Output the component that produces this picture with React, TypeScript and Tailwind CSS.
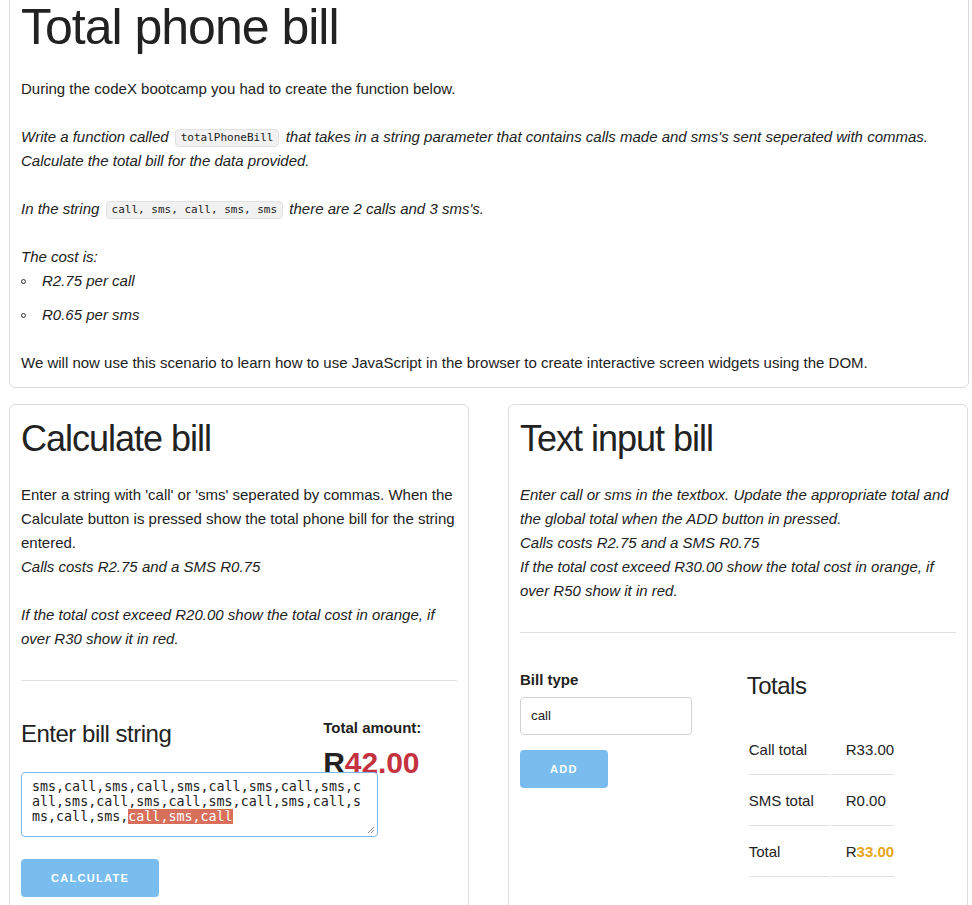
import React from 'react';

const Code: React.FC<{ children: React.ReactNode }> = ({ children }) => (
  <code className="not-italic inline-block align-[1px] mx-[2px] px-[5px] h-[18px] leading-[16px] text-[11px] bg-[#f1f1f1] border border-[#e1e1e1] rounded-[4px] font-['DejaVu_Sans_Mono',monospace]">
    {children}
  </code>
);

const Button: React.FC<{ label: string }> = ({ label }) => (
  <button className="h-[38px] px-[30px] bg-[#79bdef] text-white text-[11px] font-bold tracking-[1.3px] uppercase rounded-[4px]">
    {label}
  </button>
);

const Bullet: React.FC<{ children: React.ReactNode }> = ({ children }) => (
  <li className="flex items-center mb-[10px]">
    <span className="w-[5px] h-[5px] rounded-full border border-[#333] mr-[16px] mt-[1px]" />
    <span>{children}</span>
  </li>
);

const Card: React.FC<{ className?: string; children: React.ReactNode }> = ({ className = '', children }) => (
  <div className={`border border-[#dcdcdc] rounded-[6px] px-[11px] pt-[11px] ${className}`}>{children}</div>
);

const App: React.FC = () => {
  const totals = [
    { label: 'Call total', value: <>R33.00</> },
    { label: 'SMS total', value: <>R0.00</> },
    { label: 'Total', value: <>R<span className="font-bold text-[#e8a520]">33.00</span></> },
  ];

  return (
    <div className="min-h-[905px] bg-white text-[#222] text-[15px] leading-[24px] font-['Liberation_Sans',Arial,sans-serif] overflow-hidden">
      <div className="ml-[9px] w-[960px]">
        {/* Intro */}
        <Card className="-mt-[15px] pb-[12px]">
          <h1 className="text-[50px] leading-[60px] tracking-[-1px] mb-[20px]">Total phone bill</h1>
          <p className="mb-[24px]">During the codeX bootcamp you had to create the function below.</p>
          <p className="italic mb-[24px]">
            Write a function called <Code>totalPhoneBill</Code> that takes in a string parameter that contains calls made
            and sms's sent seperated with commas.
            <br />
            Calculate the total bill for the data provided.
          </p>
          <p className="italic mb-[24px]">
            In the string <Code>call, sms, call, sms, sms</Code> there are 2 calls and 3 sms's.
          </p>
          <p className="italic">The cost is:</p>
          <ul className="italic mb-[24px]">
            <Bullet>R2.75 per call</Bullet>
            <Bullet>R0.65 per sms</Bullet>
          </ul>
          <p>We will now use this scenario to learn how to use JavaScript in the browser to create interactive screen widgets using the DOM.</p>
        </Card>

        <div className="flex mt-[16px] gap-[39px]">
          {/* Calculate bill */}
          <Card className="w-[460px] pb-[40px]">
            <h3 className="text-[36px] leading-[46.8px] tracking-[-1px] mb-[20px]">Calculate bill</h3>
            <p className="mb-[24px]">
              Enter a string with 'call' or 'sms' seperated by commas. When the Calculate button is pressed show the total
              phone bill for the string entered.
              <br />
              <em>Calls costs R2.75 and a SMS R0.75</em>
            </p>
            <p className="italic">If the total cost exceed R20.00 show the total cost in orange, if over R30 show it in red.</p>
            <hr className="mt-[29px] mb-[35px] border-t border-[#e1e1e1]" />
            <div className="flex">
              <div className="w-[65.33%] shrink-0">
                <h5 className="text-[24px] leading-[36px] tracking-[-0.5px] mb-[20px]">Enter bill string</h5>
                <div className="relative w-[357px] h-[65px] bg-white border border-[#7ab8e8] rounded-[4px] px-[10px] py-[6px] text-[13.33px] leading-[15px] break-all font-['DejaVu_Sans_Mono',monospace]">
                  sms,call,sms,call,sms,call,sms,call,sms,call,sms,call,sms,call,sms,call,sms,call,sms,call,sms,
                  <span className="bg-[#d76f5b] text-white">call,sms,call</span>
                  <svg className="absolute right-[2px] bottom-[2px]" width="8" height="8" viewBox="0 0 8 8">
                    <path d="M1 7L7 1M4 7L7 4" stroke="#888" strokeWidth="1" />
                  </svg>
                </div>
                <div className="mt-[22px]">
                  <Button label="Calculate" />
                </div>
              </div>
              <div className="ml-[4%] w-[30.66%] shrink-0">
                <label className="block font-bold mb-[3px]">Total amount:</label>
                <h4 className="text-[30px] leading-[40.5px] tracking-[-0.1px] font-bold">
                  R<span className="text-[#c4313f]">42.00</span>
                </h4>
              </div>
            </div>
          </Card>

          {/* Text input bill */}
          <Card className="w-[460px] pb-[40px]">
            <h3 className="text-[36px] leading-[46.8px] tracking-[-1px] mb-[20px]">Text input bill</h3>
            <p className="italic">
              Enter call or sms in the textbox. Update the appropriate total and the global total when the ADD button in
              pressed.
              <br />
              Calls costs R2.75 and a SMS R0.75
              <br />
              If the total cost exceed R30.00 show the total cost in orange, if over R50 show it in red.
            </p>
            <hr className="mt-[29px] mb-[35px] border-t border-[#e1e1e1]" />
            <div className="flex">
              <div className="w-[48%] shrink-0">
                <label className="block font-bold mb-[5px]">Bill type</label>
                <input
                  readOnly
                  value="call"
                  className="block w-[172px] h-[38px] border border-[#d1d1d1] rounded-[4px] px-[10px] text-[13.33px] text-[#222] outline-none font-['Liberation_Sans',Arial,sans-serif]"
                />
                <div className="mt-[15px]">
                  <Button label="Add" />
                </div>
              </div>
              <div className="ml-[4%] w-[48%] shrink-0">
                <h5 className="text-[24px] leading-[36px] tracking-[-0.5px] mb-[20px]">Totals</h5>
                <table className="border-separate border-spacing-[2px]">
                  <tbody>
                    {totals.map((row) => (
                      <tr key={row.label}>
                        <td className="py-[12px] pr-[15px] pl-0 border-b border-[#e1e1e1] whitespace-nowrap">{row.label}</td>
                        <td className="py-[12px] pl-[15px] pr-0 border-b border-[#e1e1e1] whitespace-nowrap">{row.value}</td>
                      </tr>
                    ))}
                  </tbody>
                </table>
              </div>
            </div>
          </Card>
        </div>
      </div>
    </div>
  );
};

export default App;
